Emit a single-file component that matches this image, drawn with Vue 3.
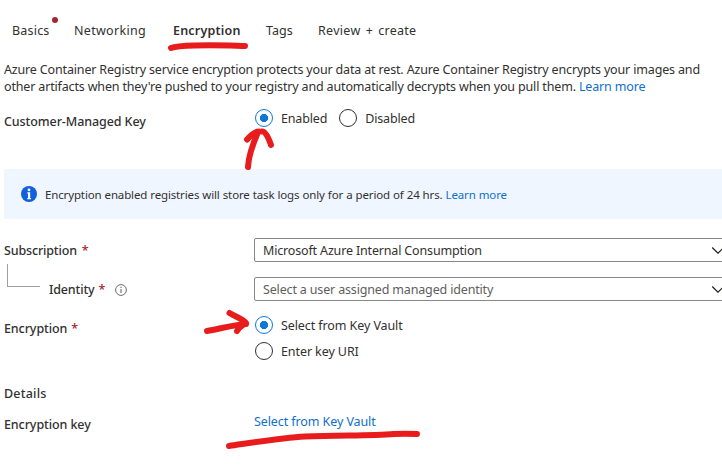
<script setup>
import { ref } from 'vue'

const tabs = [
  { name: 'Basics', id: 'basics', alert: true },
  { name: 'Networking', id: 'networking' },
  { name: 'Encryption', id: 'encryption' },
  { name: 'Tags', id: 'tags' },
  { name: 'Review + create', id: 'review' },
]
const activeTab = ref('encryption')
const managedKey = ref('Enabled')
const keySource = ref('Select from Key Vault')
</script>

<template>
  <main class="page">
    <nav class="tabs">
      <button
        v-for="tab in tabs"
        :key="tab.id"
        :class="['tab', tab.id, { active: activeTab === tab.id }]"
        @click="activeTab = tab.id"
      >{{ tab.name }}<i v-if="tab.alert" class="alert"></i></button>
    </nav>

    <p class="intro">
      <span>Azure Container Registry service encryption protects your data at rest. Azure Container Registry encrypts your images and</span><br>
      <span>other artifacts when they're pushed to your registry and automatically decrypts when you pull them. <a>Learn more</a></span>
    </p>

    <section class="row managed">
      <div class="label"><span class="loose">Customer-Managed Key</span></div>
      <div class="options">
        <label v-for="o in ['Enabled', 'Disabled']" :key="o" class="option" @click="managedKey = o">
          <span :class="['radio', { checked: managedKey === o }]"></span><span>{{ o }}</span>
        </label>
      </div>
    </section>

    <aside class="banner">
      <svg class="info" viewBox="0 0 16 16" width="16" height="16">
        <circle cx="8" cy="8" r="8" fill="#1160dc" />
        <circle cx="8" cy="3.9" r="1.4" fill="#fff" />
        <path d="M6.3 6.3H9.2V12H10V13.2H6.2V12H7V7.4H6.3Z" fill="#fff" />
      </svg>
      <span class="banner-text">Encryption enabled registries will store task logs only for a period of 24 hrs. <a>Learn more</a></span>
    </aside>

    <section class="row subscription">
      <div class="label"><span>Subscription</span><b>*</b></div>
      <div class="select"><span>Microsoft Azure Internal Consumption</span>
        <svg width="12" height="8" viewBox="0 0 12 8"><path d="M.2 1.5 6 7.2 11.8 1.5" /></svg>
      </div>
    </section>

    <section class="row identity">
      <div class="label">
        <i class="branch"></i><span>Identity</span><b>*</b>
        <svg class="hint" width="12" height="12" viewBox="0 0 12 12">
          <circle cx="6" cy="6" r="5.4" fill="none" stroke="#605e5c" stroke-width=".9" />
          <path d="M5.5 2.8h1v1.1h-1zM5.5 5h1v4.1h-1z" fill="#605e5c" />
        </svg>
      </div>
      <div class="select empty"><span>Select a user assigned managed identity</span>
        <svg width="12" height="8" viewBox="0 0 12 8"><path d="M.2 1.5 6 7.2 11.8 1.5" /></svg>
      </div>
    </section>

    <section class="row source">
      <div class="label"><span class="loose">Encryption</span><b>*</b></div>
      <div class="options stacked">
        <label v-for="o in ['Select from Key Vault', 'Enter key URI']" :key="o" class="option loose" @click="keySource = o">
          <span :class="['radio', { checked: keySource === o }]"></span><span>{{ o }}</span>
        </label>
      </div>
    </section>

    <h2 class="details">Details</h2>
    <section class="row key">
      <div class="label"><span class="loose">Encryption key</span></div>
      <a class="loose">Select from Key Vault</a>
    </section>

    <svg class="ink" width="722" height="475" viewBox="0 0 722 475">
      <path d="M171 48C176 46 184 45.8 195 45.5C214 44.8 228 45.5 245 46" />
      <path d="M248 167C248.500 156 252 146 258 132M247 139.500C250 136 254 131.500 259 131.500M262 131.500Q266 130.500 271 145" />
      <path d="M207 331C219 329 233 325 246 324M229.500 313C236 317 243 319 246 323C242 326 239 327 237 331" />
      <path d="M229 446C250 443 280 438 305 436.5C340 435 370 436 394 434Q404 433.5 417 434" />
    </svg>
  </main>
</template>

<style>
body { background: #fff; overflow: hidden; }
</style>

<style scoped>
.page {
  position: relative;
  width: 722px;
  height: 475px;
  box-sizing: border-box;
  padding: 20px 0 0 4px;
  overflow: hidden;
  font-family: "Noto Sans", "Open Sans", sans-serif;
  font-size: 12.5px;
  line-height: 17px;
  letter-spacing: -0.16px;
  color: #323130;
  white-space: nowrap;
}
a { color: #0f70cc; cursor: pointer; }
.tabs { display: flex; height: 22px; padding-left: 8px; }
.tab {
  position: relative;
  flex: none;
  padding: 0;
  border: 0;
  background: none;
  font: inherit;
  line-height: 22px;
  letter-spacing: 0.2px;
  color: inherit;
  text-align: left;
}
.tab.active { font-weight: 600; }
.basics { width: 62px; }
.tab.networking { width: 99px; letter-spacing: 0.3px; }
.encryption { width: 93px; }
.tab.tags { width: 52px; letter-spacing: 0; }
.tab.review { letter-spacing: 0.3px; word-spacing: 1.5px; }
.alert { position: absolute; left: 40px; top: -3px; width: 6px; height: 6px; border-radius: 50%; background: #a4262c; }
.intro { margin: 19px 0 0; }
.row { display: flex; }
.label { display: flex; flex: none; width: 250px; font-weight: 500; }
.label b { margin-left: 5px; font-weight: 500; color: #a4262c; }
.loose { letter-spacing: -0.09px; }
.managed { margin-top: 14px; height: 60px; }
.managed .label { padding-top: 4px; }
.options { display: flex; gap: 12px; padding-left: 1px; }
.option { display: flex; gap: 8px; height: 18px; line-height: 19px; }
.radio { box-sizing: border-box; flex: none; width: 18px; height: 18px; border: 1px solid #323130; border-radius: 50%; }
.radio.checked { border-color: #0f78d4; background: radial-gradient(circle, #0f78d4 3.8px, transparent 4.4px); }
.banner { display: flex; align-items: center; gap: 8px; height: 50px; padding-left: 17px; border-radius: 2px 0 0 2px; background: #eff6ff; }
.banner-text { padding-top: 1px; font-size: 11.5px; letter-spacing: -0.14px; word-spacing: 0.2px; }
.info { flex: none; }
.subscription { margin-top: 19px; height: 39px; }
.select {
  display: flex;
  align-items: center;
  flex: none;
  box-sizing: border-box;
  width: 480px;
  height: 24px;
  padding: 0 9px 0 8px;
  border: 1px solid #8a8886;
  border-radius: 2px;
}
.select svg { margin-left: auto; fill: none; stroke: #201f1e; stroke-width: 1.2; }
.empty { color: #605e5c; }
.subscription .label, .identity .label { padding-top: 4px; box-sizing: border-box; }
.identity { height: 39px; }
.branch { width: 33px; height: 23px; margin: -17px 9px 0 3px; border: solid #a19f9d; border-width: 0 0 1px 1px; box-sizing: border-box; }
.identity .label b { margin-left: 4px; }
.hint { margin: 3px 0 0 10px; }
.source { height: 69px; }
.source .label { padding-top: 4px; }
.source .label b { margin-left: 4px; }
.stacked { flex-direction: column; gap: 8px; }
.details { margin: 0; font-size: inherit; font-weight: 500; line-height: 17px; letter-spacing: 0.2px; }
.key { margin-top: 11px; }
.key .label { padding-top: 3px; }
.ink { position: absolute; inset: 0; pointer-events: none; }
.ink path { fill: none; stroke: #e81c1c; stroke-width: 6; stroke-linecap: round; stroke-linejoin: round; }
</style>
